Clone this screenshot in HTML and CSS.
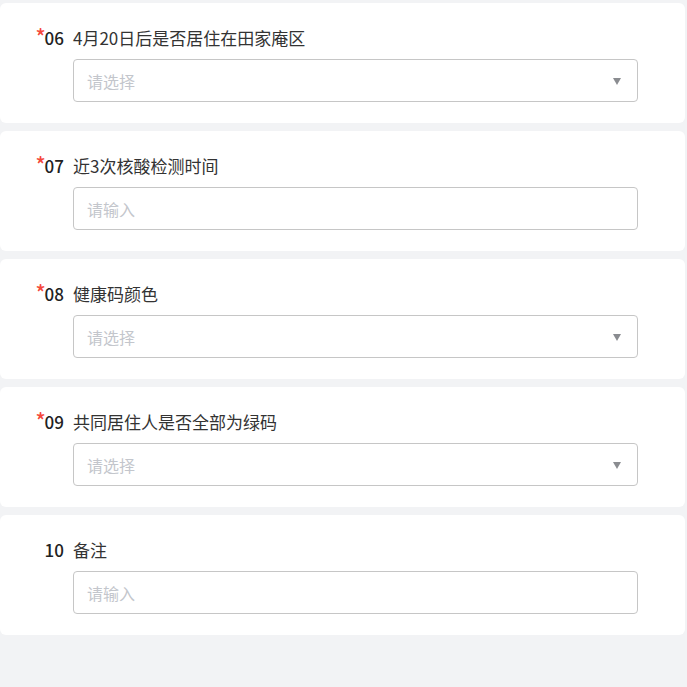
FILE: index.html
```html
<!DOCTYPE html>
<html lang="zh">
<head>
<meta charset="utf-8">
<link rel="stylesheet" href="styles.css">
</head>
<body>
<div class="list">
  <div class="card">
    <div class="title"><span class="num"><span class="req">*</span><span>06</span></span><span class="text">4月20日后是否居住在田家庵区</span></div>
    <div class="field select"><span class="ph">请选择</span><span class="arrow"></span></div>
  </div>
  <div class="card">
    <div class="title"><span class="num"><span class="req">*</span><span>07</span></span><span class="text">近3次核酸检测时间</span></div>
    <div class="field"><span class="ph">请输入</span></div>
  </div>
  <div class="card">
    <div class="title"><span class="num"><span class="req">*</span><span>08</span></span><span class="text">健康码颜色</span></div>
    <div class="field select"><span class="ph">请选择</span><span class="arrow"></span></div>
  </div>
  <div class="card">
    <div class="title"><span class="num"><span class="req">*</span><span>09</span></span><span class="text">共同居住人是否全部为绿码</span></div>
    <div class="field select"><span class="ph">请选择</span><span class="arrow"></span></div>
  </div>
  <div class="card">
    <div class="title"><span class="num"><span>10</span></span><span class="text">备注</span></div>
    <div class="field"><span class="ph">请输入</span></div>
  </div>
</div>
</body>
</html>
```

FILE: styles.css
```css
html, body {
  margin: 0;
  padding: 0;
  background: #f2f3f5;
  font-family: "Noto Sans CJK SC", "Noto Sans", sans-serif;
}
.list {
  padding-top: 3px;
  display: flex;
  flex-direction: column;
  gap: 8px;
  width: 685px;
}
.card {
  background: #fff;
  border-radius: 6px;
  height: 120px;
  box-sizing: border-box;
  padding-top: 24px;
}
.title {
  display: flex;
  align-items: center;
  height: 22px;
  line-height: 22px;
  font-size: 17px;
}
.num {
  display: flex;
  justify-content: flex-end;
  align-items: flex-start;
  width: 64px;
  height: 22px;
  color: #222;
  font-weight: 500;
  flex: none;
}
.req {
  height: 14px;
  line-height: 22px;
  margin-top: -2px;
  margin-right: -1px;
  overflow: visible;
  color: #f5483b;
  font-size: 21px;
  font-weight: 500;
}
.text {
  margin-left: 9px;
  color: #333;
}
.field {
  margin-top: 10px;
  margin-left: 73px;
  width: 565px;
  height: 43px;
  box-sizing: border-box;
  border: 1px solid #c6c6c6;
  border-radius: 4px;
  display: flex;
  align-items: center;
  padding: 0 16px 0 13px;
}
.ph {
  flex: 1;
  font-size: 16px;
  color: #c3c6cc;
}
.arrow {
  width: 0;
  height: 0;
  border-left: 4.5px solid transparent;
  border-right: 4.5px solid transparent;
  border-top: 7px solid #8a8c90;
  margin-top: 1px;
}
```
